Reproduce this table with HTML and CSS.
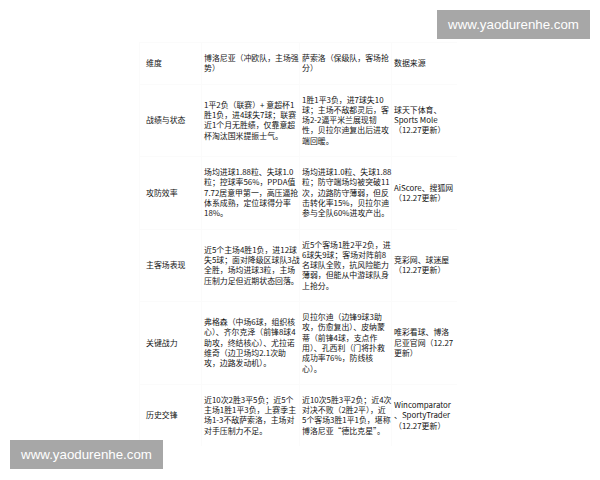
FILE: index.html
```html
<!DOCTYPE html>
<html lang="zh-CN">
<head>
<meta charset="utf-8">
<title>博洛尼亚 vs 萨索洛</title>
<link rel="stylesheet" href="styles.css">
</head>
<body>
<table class="compare">
  <colgroup>
    <col class="c-dim"><col class="c-home"><col class="c-away"><col class="c-src">
  </colgroup>
  <tr>
    <td class="dim">维度</td>
    <td>博洛尼亚（冲欧队，主场强<br>势）</td>
    <td>萨索洛（保级队，客场抢<br>分）</td>
    <td>数据来源</td>
  </tr>
  <tr>
    <td class="dim">战绩与状态</td>
    <td>1平2负（联赛）+ 意超杯1<br>胜1负，进4球失7球；联赛<br>近1个月无胜绩，仅靠意超<br>杯淘汰国米提振士气。</td>
    <td>1胜1平3负，进7球失10<br>球；主场不敌都灵后，客<br>场2-2逼平米兰展现韧<br>性，贝拉尔迪复出后进攻<br>端回暖。</td>
    <td>球天下体育、<br>Sports Mole<br>（12.27更新）</td>
  </tr>
  <tr>
    <td class="dim">攻防效率</td>
    <td>场均进球1.88粒、失球1.0<br>粒；控球率56%，PPDA值<br>7.72居意甲第一，高压逼抢<br>体系成熟，定位球得分率<br>18%。</td>
    <td>场均进球1.0粒、失球1.88<br>粒；防守端场均被突破11<br>次，边路防守薄弱，但反<br>击转化率15%，贝拉尔迪<br>参与全队60%进攻产出。</td>
    <td>AiScore、搜狐网<br>（12.27更新）</td>
  </tr>
  <tr>
    <td class="dim">主客场表现</td>
    <td>近5个主场4胜1负，进12球<br>失5球；面对降级区球队3战<br>全胜，场均进球3粒，主场<br>压制力足但近期状态回落。</td>
    <td>近5个客场1胜2平2负，进<br>6球失9球；客场对阵前8<br>名球队全败，抗风险能力<br>薄弱，但能从中游球队身<br>上抢分。</td>
    <td>竞彩网、球迷屋<br>（12.27更新）</td>
  </tr>
  <tr>
    <td class="dim">关键战力</td>
    <td>弗格森（中场6球，组织核<br>心）、齐尔克泽（前锋8球4<br>助攻，终结核心）、尤拉诺<br>维奇（边卫场均2.1次助<br>攻，边路发动机）。</td>
    <td>贝拉尔迪（边锋9球3助<br>攻，伤愈复出）、皮纳蒙<br>蒂（前锋4球，支点作<br>用）、孔西利（门将扑救<br>成功率76%，防线核<br>心）。</td>
    <td>唯彩看球、博洛<br>尼亚官网（12.27<br>更新）</td>
  </tr>
  <tr>
    <td class="dim">历史交锋</td>
    <td>近10次2胜3平5负；近5个<br>主场1胜1平3负，上赛季主<br>场1-3不敌萨索洛，主场对<br>对手压制力不足。</td>
    <td>近10次5胜3平2负；近4次<br>对决不败（2胜2平），近<br>5个客场3胜1平1负，堪称<br>博洛尼亚“德比克星”。</td>
    <td>Wincomparator<br>、SportyTrader<br>（12.27更新）</td>
  </tr>
</table>
<div class="watermark wm-top">www.yaodurenhe.com</div>
<div class="watermark wm-bottom">www.yaodurenhe.com</div>
</body>
</html>
```

FILE: styles.css
```css
html, body {
  margin: 0;
  padding: 0;
  background: #ffffff;
}

body {
  width: 600px;
  height: 480px;
  position: relative;
  overflow: hidden;
  font-family: "Noto Sans CJK SC", "Noto Sans", sans-serif;
  color: #141414;
}

.compare {
  margin: 42px 0 0 139px;
  border-collapse: collapse;
  table-layout: fixed;
  width: 317px;
  font-size: 7.9px;
  line-height: 10.3px;
}

.c-dim { width: 62px; }
.c-home { width: 98px; }
.c-away { width: 92px; }
.c-src { width: 65px; }

.compare td {
  padding: 10px 1px 10px 2px;
  vertical-align: middle;
  white-space: nowrap;
  overflow: visible;
  border-left: 1px solid #fbfbfb;
  border-top: 1px solid #fbfbfb;
}

.compare td.dim {
  padding-left: 6px;
}

.watermark {
  position: absolute;
  width: 153px;
  height: 29px;
  line-height: 29px;
  text-align: center;
  background: #a7a7a7;
  color: #ffffff;
  font-family: "Liberation Sans", Arial, sans-serif;
  font-size: 13.3px;
}

.wm-top {
  left: 437px;
  top: 10px;
}

.wm-bottom {
  left: 10px;
  top: 440px;
}
```
